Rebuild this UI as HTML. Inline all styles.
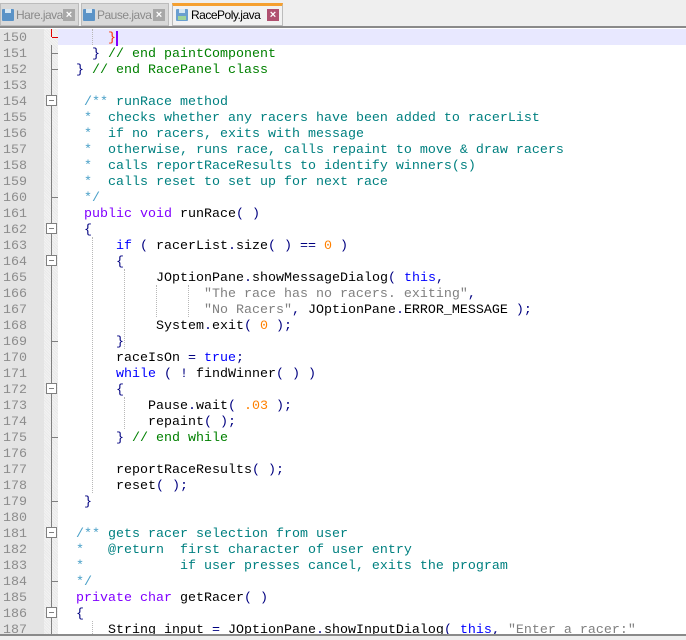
<!DOCTYPE html>
<html><head><meta charset="utf-8"><style>
*{margin:0;padding:0;box-sizing:border-box}
body{width:686px;height:640px;overflow:hidden;background:#fff;position:relative;font-family:"Liberation Mono",monospace;font-size:13.33px}
#tabs{position:absolute;left:0;top:0;width:686px;height:28px;background:#efefef;border-bottom:2px solid #8a8a8a}
.tab{position:absolute;top:3px;height:23px;background:#d9d9d9;border:1px solid #bcbcbc;font-family:"Liberation Sans",sans-serif;font-size:12px;color:#8a8a8a;line-height:22px;padding-left:15px;letter-spacing:-0.5px;white-space:nowrap;overflow:hidden}
.tab.act{background:#f2f2f2;color:#000;border-top:3px solid #f5a030;line-height:19px;top:3px;padding-left:18px}
.ico{position:absolute;left:1px;top:5px;width:12px;height:12px;background:#5b93c7;border-radius:1px}
.ico:after{content:"";position:absolute;left:3px;top:0;width:6px;height:4px;background:#d8e8f4}
.act .ico{top:3px;left:3px;background:#6a9fd0}
.act .ico:before{content:"";position:absolute;left:2px;bottom:1px;width:8px;height:4px;background:#9fd39a}
.x{position:absolute;right:3px;top:5px;width:12px;height:12px;background:#a8a8a8;color:#fff;font-size:11px;line-height:12px;text-align:center;font-weight:bold;letter-spacing:0}
.act .x{background:#b05070;top:3px}
#nums{position:absolute;left:0;top:29px;width:44px;height:605px;background:#e4e4e4}
#fold{position:absolute;left:44px;top:29px;width:14px;height:605px;background:repeating-linear-gradient(45deg,#f3f3f3 0 1px,#e9e9e9 1px 2px)}
.vl{position:absolute;left:51px;width:1px;background:#808080}
.tk{position:absolute;left:52px;width:6px;height:1px;background:#808080}
.bx{position:absolute;left:46px;width:11px;height:11px;border:1px solid #808080;background:#fff}
.bx:after{content:"";position:absolute;left:2px;top:4px;width:5px;height:1px;background:#808080}
.ln{position:absolute;left:3px;color:#8c8c8c;height:16px;line-height:16px;margin-top:2px}
.l{position:absolute;left:60px;white-space:pre;height:16px;line-height:16px;color:#000;margin-top:2px}
.g{position:absolute;width:0;border-left:1px dotted #b8b8b8}
.o{color:#000080}.k{color:#0000ff}.t{color:#8000ff}.n{color:#ff8000}.s{color:#808080}.c{color:#008000}.d{color:#008080}.ds{color:#4aa0c8}
#hl{position:absolute;left:58px;top:29px;width:628px;height:16px;background:#e8e8ff}
#bot{position:absolute;left:0;top:634px;width:686px;height:6px;background:#efefef;border-top:2px solid #8a8a8a}
</style></head><body>
<div id="tabs">
<div class="tab" style="left:0;width:79px"><span class="ico"></span>Hare.java<span class="x">×</span></div>
<div class="tab" style="left:81px;width:88px"><span class="ico"></span>Pause.java<span class="x">×</span></div>
<div class="tab act" style="left:172px;width:111px"><span class="ico"></span>RacePoly.java<span class="x">×</span></div>
</div>
<div id="nums"></div><div id="fold"></div>
<div id="hl"></div>
<div class="vl" style="top:29px;height:8px;background:#e00000"></div>
<div class="tk" style="top:37px;background:#e00000"></div>
<div class="vl" style="top:45px;height:589px"></div>
<div class="tk" style="top:53px"></div><div class="tk" style="top:69px"></div>
<div class="tk" style="top:197px"></div><div class="tk" style="top:341px"></div>
<div class="tk" style="top:437px"></div><div class="tk" style="top:501px"></div>
<div class="tk" style="top:581px"></div>
<div class="bx" style="top:95px"></div><div class="bx" style="top:223px"></div>
<div class="bx" style="top:255px"></div><div class="bx" style="top:383px"></div>
<div class="bx" style="top:527px"></div><div class="bx" style="top:607px"></div>
<div class="g" style="left:92px;top:29px;height:16px"></div>
<div class="g" style="left:92px;top:237px;height:256px"></div>
<div class="g" style="left:124px;top:269px;height:80px"></div>
<div class="g" style="left:124px;top:397px;height:32px"></div>
<div class="g" style="left:156px;top:285px;height:32px"></div>
<div class="g" style="left:188px;top:285px;height:32px"></div>
<div class="g" style="left:92px;top:621px;height:13px"></div>
<div class="ln" style="top:29px">150</div><div class="ln" style="top:45px">151</div><div class="ln" style="top:61px">152</div><div class="ln" style="top:77px">153</div><div class="ln" style="top:93px">154</div><div class="ln" style="top:109px">155</div><div class="ln" style="top:125px">156</div><div class="ln" style="top:141px">157</div><div class="ln" style="top:157px">158</div><div class="ln" style="top:173px">159</div><div class="ln" style="top:189px">160</div><div class="ln" style="top:205px">161</div><div class="ln" style="top:221px">162</div><div class="ln" style="top:237px">163</div><div class="ln" style="top:253px">164</div><div class="ln" style="top:269px">165</div><div class="ln" style="top:285px">166</div><div class="ln" style="top:301px">167</div><div class="ln" style="top:317px">168</div><div class="ln" style="top:333px">169</div><div class="ln" style="top:349px">170</div><div class="ln" style="top:365px">171</div><div class="ln" style="top:381px">172</div><div class="ln" style="top:397px">173</div><div class="ln" style="top:413px">174</div><div class="ln" style="top:429px">175</div><div class="ln" style="top:445px">176</div><div class="ln" style="top:461px">177</div><div class="ln" style="top:477px">178</div><div class="ln" style="top:493px">179</div><div class="ln" style="top:509px">180</div><div class="ln" style="top:525px">181</div><div class="ln" style="top:541px">182</div><div class="ln" style="top:557px">183</div><div class="ln" style="top:573px">184</div><div class="ln" style="top:589px">185</div><div class="ln" style="top:605px">186</div><div class="ln" style="top:621px">187</div>
<div class="l" style="top:29px">      <span style="color:#ff3000">}</span><span style="border-left:2px solid #8000ff"></span></div>
<div class="l" style="top:45px">    <span class="o">}</span> <span class="c">// end paintComponent</span></div>
<div class="l" style="top:61px">  <span class="o">}</span> <span class="c">// end RacePanel class</span></div>
<div class="l" style="top:93px">   <span class="ds">/**</span><span class="d"> runRace method</span></div>
<div class="l" style="top:109px">   <span class="ds">*</span><span class="d">  checks whether any racers have been added to racerList</span></div>
<div class="l" style="top:125px">   <span class="ds">*</span><span class="d">  if no racers, exits with message</span></div>
<div class="l" style="top:141px">   <span class="ds">*</span><span class="d">  otherwise, runs race, calls repaint to move &amp; draw racers</span></div>
<div class="l" style="top:157px">   <span class="ds">*</span><span class="d">  calls reportRaceResults to identify winners(s)</span></div>
<div class="l" style="top:173px">   <span class="ds">*</span><span class="d">  calls reset to set up for next race</span></div>
<div class="l" style="top:189px">   <span class="ds">*/</span></div>
<div class="l" style="top:205px">   <span class="t">public void</span> runRace<span class="o">( )</span></div>
<div class="l" style="top:221px">   <span class="o">{</span></div>
<div class="l" style="top:237px">       <span class="k">if</span> <span class="o">(</span> racerList<span class="o">.</span>size<span class="o">( ) ==</span> <span class="n">0</span> <span class="o">)</span></div>
<div class="l" style="top:253px">       <span class="o">{</span></div>
<div class="l" style="top:269px">            JOptionPane<span class="o">.</span>showMessageDialog<span class="o">(</span> <span class="k">this</span><span class="o">,</span></div>
<div class="l" style="top:285px">                  <span class="s">"The race has no racers. exiting"</span><span class="o">,</span></div>
<div class="l" style="top:301px">                  <span class="s">"No Racers"</span><span class="o">,</span> JOptionPane<span class="o">.</span>ERROR_MESSAGE <span class="o">);</span></div>
<div class="l" style="top:317px">            System<span class="o">.</span>exit<span class="o">(</span> <span class="n">0</span> <span class="o">);</span></div>
<div class="l" style="top:333px">       <span class="o">}</span></div>
<div class="l" style="top:349px">       raceIsOn <span class="o">=</span> <span class="k">true</span><span class="o">;</span></div>
<div class="l" style="top:365px">       <span class="k">while</span> <span class="o">( !</span> findWinner<span class="o">( ) )</span></div>
<div class="l" style="top:381px">       <span class="o">{</span></div>
<div class="l" style="top:397px">           Pause<span class="o">.</span>wait<span class="o">(</span> <span class="n">.03</span> <span class="o">);</span></div>
<div class="l" style="top:413px">           repaint<span class="o">( );</span></div>
<div class="l" style="top:429px">       <span class="o">}</span> <span class="c">// end while</span></div>
<div class="l" style="top:461px">       reportRaceResults<span class="o">( );</span></div>
<div class="l" style="top:477px">       reset<span class="o">( );</span></div>
<div class="l" style="top:493px">   <span class="o">}</span></div>
<div class="l" style="top:525px">  <span class="ds">/**</span><span class="d"> gets racer selection from user</span></div>
<div class="l" style="top:541px">  <span class="ds">*</span><span class="d">   @return  first character of user entry</span></div>
<div class="l" style="top:557px">  <span class="ds">*</span><span class="d">            if user presses cancel, exits the program</span></div>
<div class="l" style="top:573px">  <span class="ds">*/</span></div>
<div class="l" style="top:589px">  <span class="t">private char</span> getRacer<span class="o">( )</span></div>
<div class="l" style="top:605px">  <span class="o">{</span></div>
<div class="l" style="top:621px">      String input <span class="o">=</span> JOptionPane<span class="o">.</span>showInputDialog<span class="o">(</span> <span class="k">this</span><span class="o">,</span> <span class="s">"Enter a racer:"</span></div>
<div id="bot"></div>
</body></html>
